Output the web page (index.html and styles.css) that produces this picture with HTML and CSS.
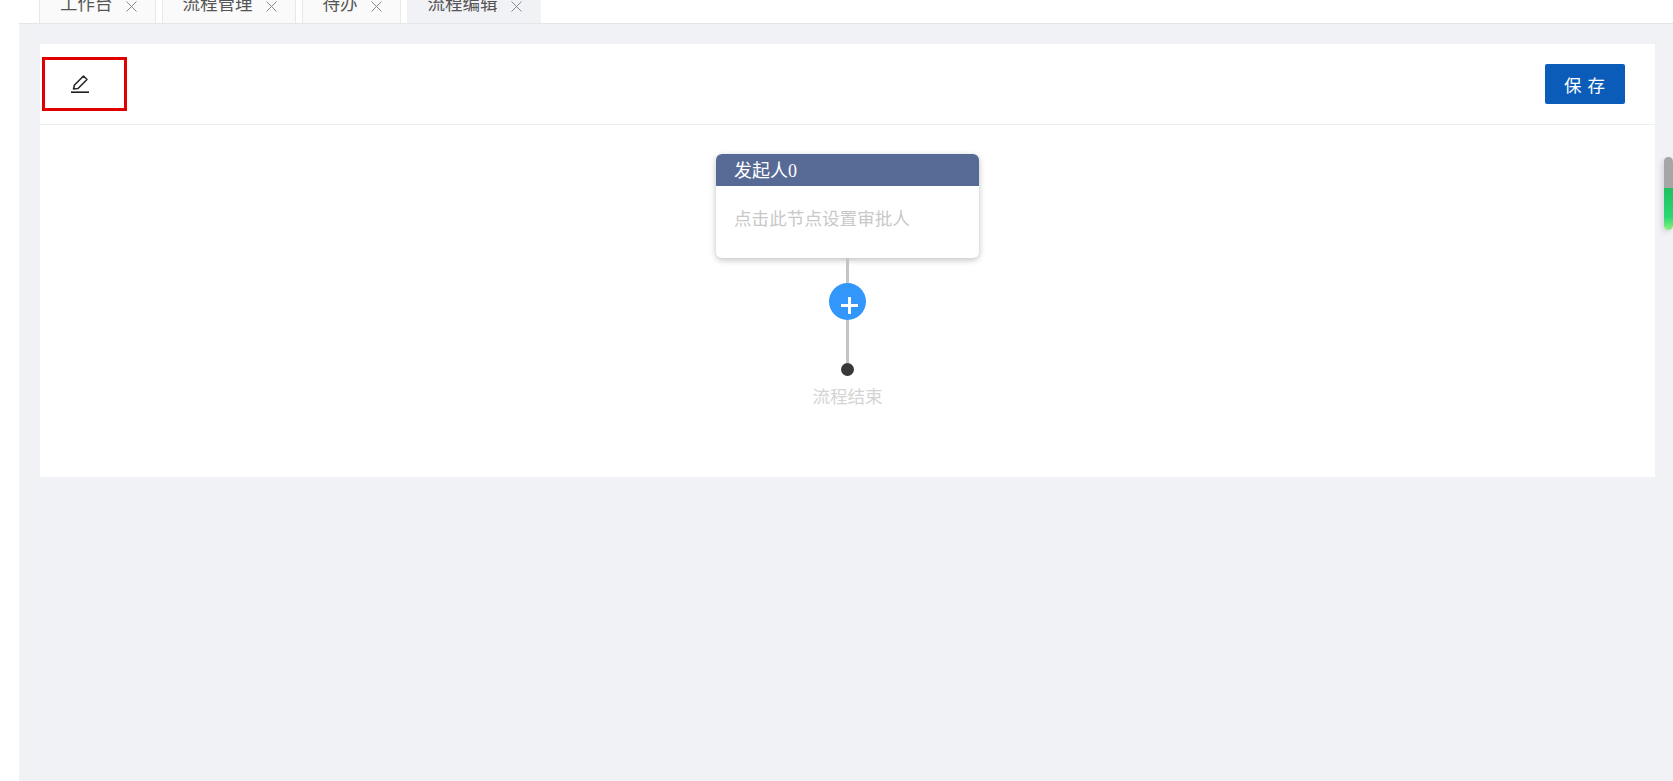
FILE: index.html
```html
<!DOCTYPE html>
<html lang="zh-CN">
<head>
    <meta charset="UTF-8">
    <title>流程编辑</title>
    <link rel="stylesheet" href="styles.css">
</head>
<body>

<div class="side"></div>

<div class="main">
    <div class="tabs">
        <div class="tab">
            <span>工作台</span>
            <svg class="close" width="11" height="11" viewBox="0 0 11 11"><path d="M0.5 0.5 L10.5 10.5 M10.5 0.5 L0.5 10.5"/></svg>
        </div>
        <div class="tab">
            <span>流程管理</span>
            <svg class="close" width="11" height="11" viewBox="0 0 11 11"><path d="M0.5 0.5 L10.5 10.5 M10.5 0.5 L0.5 10.5"/></svg>
        </div>
        <div class="tab">
            <span>待办</span>
            <svg class="close" width="11" height="11" viewBox="0 0 11 11"><path d="M0.5 0.5 L10.5 10.5 M10.5 0.5 L0.5 10.5"/></svg>
        </div>
        <div class="tab active">
            <span>流程编辑</span>
            <svg class="close" width="11" height="11" viewBox="0 0 11 11"><path d="M0.5 0.5 L10.5 10.5 M10.5 0.5 L0.5 10.5"/></svg>
        </div>
    </div>

    <div class="content">
        <div class="panel">
            <div class="toolbar">
                <div class="name-box">
                    <svg class="edit-icon" width="20" height="20" viewBox="0 0 20 20">
                        <path d="M3.5 15 L4.5 11 L13.5 2 L17 5.5 L8 14.5 Z" fill="none" stroke="#2a2a2a" stroke-width="1.6" stroke-linejoin="round"/>
                        <path d="M1 18.2 H19" stroke="#1c1c1c" stroke-width="1.6"/>
                    </svg>
                </div>
                <button class="save-btn" type="button">保 存</button>
            </div>

            <div class="canvas">
                <div class="node">
                    <div class="node-title">发起人0</div>
                    <div class="node-body">点击此节点设置审批人</div>
                </div>
                <div class="line line-top"></div>
                <div class="add-btn">
                    <svg width="17" height="17" viewBox="0 0 17 17">
                        <path d="M8.5 0 V17 M0 8.5 H17" stroke="#fff" stroke-width="3"/>
                    </svg>
                </div>
                <div class="line line-bottom"></div>
                <div class="end-dot"></div>
                <div class="end-text">流程结束</div>
            </div>
        </div>
    </div>
</div>

<div class="scroll-thumb"></div>

</body>
</html>
```

FILE: styles.css
```css
html, body {
    height: 100%;
}

body {
    font-family: "Noto Sans CJK SC", "Liberation Sans", sans-serif;
    background-color: #fff;
    display: flex;
    margin: 0;
    overflow: hidden;
}

.side {
    width: 19px;
    flex-shrink: 0;
    background-color: #fff;
}

.main {
    flex: 1;
    display: flex;
    flex-direction: column;
    background-color: #f0f2f5;
}

.tabs {
    height: 24px;
    box-sizing: border-box;
    display: flex;
    align-items: flex-end;
    gap: 6px;
    padding-left: 20px;
    background-color: #fff;
    border-bottom: 1px solid #e4e6ea;
    overflow: hidden;
}

.tab {
    flex-shrink: 0;
    height: 42px;
    box-sizing: border-box;
    display: flex;
    align-items: center;
    gap: 13px;
    padding: 0 18px 0 20px;
    font-size: 17.5px;
    color: #555;
    background-color: #fafafa;
    border: 1px solid #e8e8e8;
    border-bottom: none;
}

.tab.active {
    background-color: #f0f2f5;
    border-color: #f0f2f5;
}

.close {
    flex-shrink: 0;
    margin-top: 7px;
    fill: none;
    stroke: #8a8a8a;
    stroke-width: 1;
}

.content {
    padding: 20px 18px 0 21px;
}

.panel {
    background-color: #fff;
    height: 433px;
}

.toolbar {
    height: 81px;
    box-sizing: border-box;
    display: flex;
    align-items: flex-start;
    justify-content: space-between;
    padding: 20px 30px 0 2px;
    border-bottom: 1px solid #eceef2;
}

.name-box {
    width: 85px;
    height: 54px;
    box-sizing: border-box;
    margin-top: -7px;
    border: 3px solid #e00000;
    display: flex;
    align-items: center;
    justify-content: center;
    padding-right: 9px;
}

.save-btn {
    width: 80px;
    height: 40px;
    font-family: inherit;
    font-size: 17.5px;
    letter-spacing: 1px;
    color: #fff;
    background-color: #0a5cb8;
    border: none;
    border-radius: 2px;
    cursor: pointer;
}

.canvas {
    display: flex;
    flex-direction: column;
    align-items: center;
    padding-top: 29px;
}

.node {
    width: 263px;
    height: 104px;
    background-color: #fff;
    border-radius: 6px;
    box-shadow: 0 2px 6px rgba(0, 0, 0, 0.25);
    overflow: hidden;
}

.node-title {
    height: 32px;
    line-height: 34px;
    padding-left: 18px;
    font-family: "Liberation Serif", "Noto Sans CJK SC", serif;
    font-size: 18px;
    color: #fff;
    background-color: #576a95;
}

.node-body {
    padding: 19px 18px 0;
    font-size: 17.6px;
    color: #c8c8c8;
}

.line {
    width: 3px;
    background-color: #c4c4c4;
}

.line-top {
    height: 25px;
}

.line-bottom {
    height: 43px;
}

.add-btn {
    width: 37px;
    height: 37px;
    box-sizing: border-box;
    padding: 8px 0 0 3px;
    border-radius: 50%;
    background-color: #3296fa;
    display: flex;
    align-items: center;
    justify-content: center;
}

.end-dot {
    width: 13px;
    height: 13px;
    border-radius: 50%;
    background-color: #383838;
}

.end-text {
    margin-top: 7px;
    font-size: 17.5px;
    color: #d4d4d4;
}

.scroll-thumb {
    position: absolute;
    left: 1664px;
    top: 157px;
    width: 9px;
    height: 73px;
    border-radius: 5px;
    background: linear-gradient(to bottom, #a6a6a6 0, #a6a6a6 31px, #1fbf62 31px, #2bd873 60px, #8cf07c 73px);
    box-shadow: -2px 2px 5px rgba(0, 0, 0, 0.12);
}
```
